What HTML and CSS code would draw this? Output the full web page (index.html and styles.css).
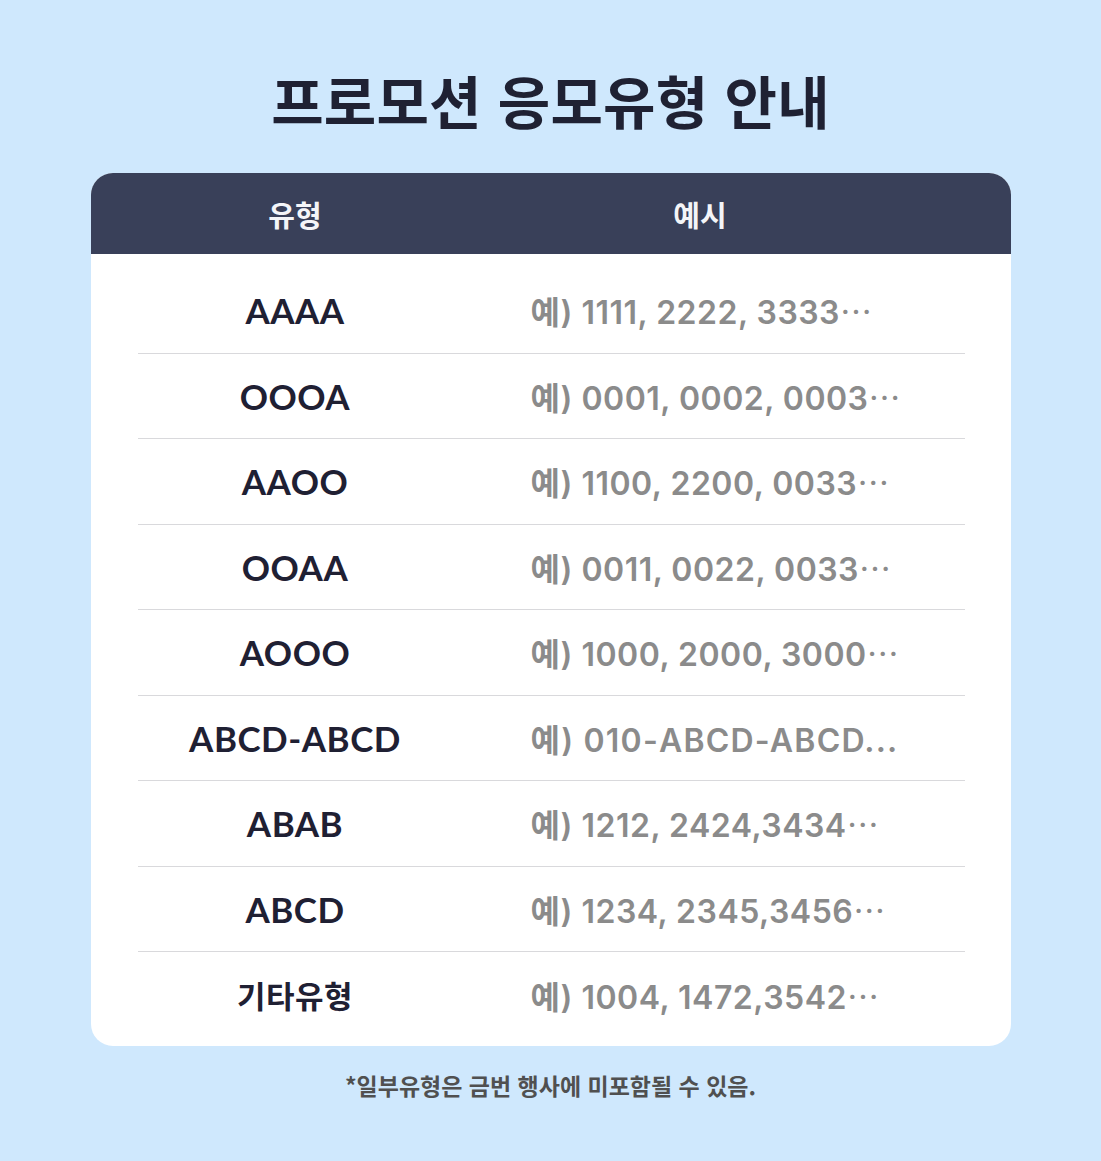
FILE: index.html
```html
<!DOCTYPE html>
<html lang="ko">
<head>
<meta charset="utf-8">
<link rel="stylesheet" href="styles.css">
</head>
<body>
<main class="page">
  <h1 class="title">프로모션 응모유형 안내</h1>
  <section class="card">
    <div class="head">
      <div class="head-cell">유형</div>
      <div class="head-cell">예시</div>
    </div>
    <div class="body">
      <div class="row"><div class="type">AAAA</div><div class="ex">예) 1111, 2222, 3333<span class="dots">…</span></div></div>
      <div class="row"><div class="type">OOOA</div><div class="ex">예) 0001, 0002, 0003<span class="dots">…</span></div></div>
      <div class="row"><div class="type">AAOO</div><div class="ex">예) 1100, 2200, 0033<span class="dots">…</span></div></div>
      <div class="row"><div class="type">OOAA</div><div class="ex">예) 0011, 0022, 0033<span class="dots">…</span></div></div>
      <div class="row"><div class="type">AOOO</div><div class="ex">예) 1000, 2000, 3000<span class="dots">…</span></div></div>
      <div class="row"><div class="type">ABCD-ABCD</div><div class="ex wide">예) 010-ABCD-ABCD...</div></div>
      <div class="row"><div class="type">ABAB</div><div class="ex">예) 1212, 2424,3434<span class="dots">…</span></div></div>
      <div class="row"><div class="type">ABCD</div><div class="ex">예) 1234, 2345,3456<span class="dots">…</span></div></div>
      <div class="row last"><div class="type kr">기타유형</div><div class="ex">예) 1004, 1472,3542<span class="dots">…</span></div></div>
    </div>
  </section>
  <p class="note">*일부유형은 금번 행사에 미포함될 수 있음.</p>
</main>
</body>
</html>
```

FILE: styles.css
```css
* { box-sizing: border-box; }
html, body {
  margin: 0;
  padding: 0;
  background: #cfe8fd;
}
body {
  font-family: "Noto Sans CJK KR", "Noto Sans", sans-serif;
  color: #1f2033;
}
.page {
  width: 1101px;
  height: 1161px;
  display: flex;
  flex-direction: column;
  align-items: center;
  padding-top: 62px;
}
.title {
  margin: 0;
  font-size: 57px;
  font-weight: 700;
  line-height: 74px;
  color: #1f2133;
  letter-spacing: 0.2px;
}
.card {
  margin-top: 37px;
  width: 920px;
  background: #ffffff;
  border-radius: 22px;
  overflow: hidden;
}
.head {
  height: 81px;
  background: #394059;
  display: grid;
  grid-template-columns: 315px 1fr;
  padding: 0 46px 0 47px;
  align-items: center;
  color: #f4f5f8;
  font-size: 29px;
  font-weight: 700;
}
.head-cell {
  text-align: center;
}
.head-cell:last-child {
  padding-right: 17px;
}
.body {
  padding: 14px 46px 8px 47px;
}
.row {
  display: grid;
  grid-template-columns: 315px 1fr;
  align-items: center;
  height: 85.5px;
  border-bottom: 1.5px solid #d9d9dc;
}
.row.last {
  border-bottom: none;
}
.type {
  text-align: center;
  font-family: "Lato", "Noto Sans CJK KR", sans-serif;
  font-weight: 700;
  font-size: 35px;
  color: #1f2033;
  letter-spacing: 0.5px;
}
.type.kr {
  font-family: "Noto Sans CJK KR", sans-serif;
  font-size: 31px;
}
.ex {
  padding-left: 78px;
  font-family: "Inter", "Noto Sans CJK KR", sans-serif;
  font-weight: 600;
  font-size: 32px;
  color: #8b8b8b;
  letter-spacing: 0.5px;
  white-space: nowrap;
}
.ex.wide {
  letter-spacing: 1.2px;
}
.dots {
  font-family: "Noto Sans CJK KR", sans-serif;
  font-weight: 400;
  font-size: 32px;
  letter-spacing: 0;
}
.note {
  margin: 22px 0 0;
  font-size: 23px;
  font-weight: 700;
  color: #505050;
}
```
